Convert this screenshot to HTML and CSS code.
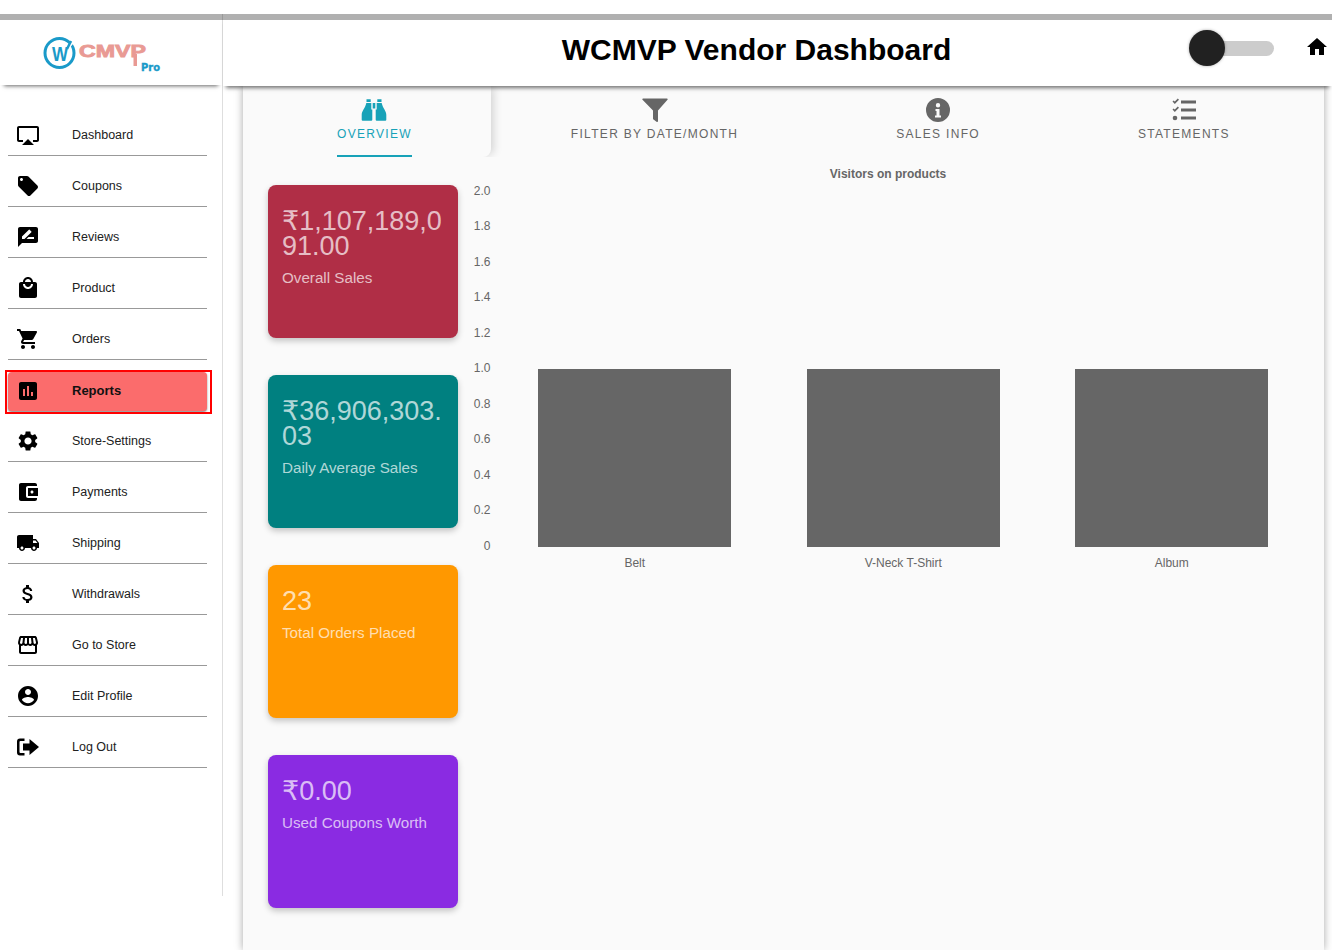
FILE: index.html
```html
<!DOCTYPE html>
<html lang="en">
<head>
  <meta charset="UTF-8">
  <meta name="viewport" content="width=device-width, initial-scale=1.0">
  <title>WCMVP Vendor Dashboard</title>
  <link rel="stylesheet" href="styles.css">
</head>
<body>
  <div class="layout">
    <aside class="sidebar">
      <div class="logo-box">
        <svg class="logo" width="120" height="40" viewBox="0 0 120 40">
          <circle cx="17.500" cy="19" r="14.500" fill="none" stroke="#1a9ac9" stroke-width="3"/>
          <path d="M27.500 12.500l5-6" stroke="white" stroke-width="2" fill="none"/>
          <path d="M25 15l4-8" stroke="#1a9ac9" stroke-width="2.500" fill="none"/>
          <text x="10" y="27" class="logo-w" textLength="16" lengthAdjust="spacingAndGlyphs">W</text>
          <text x="37" y="23" class="logo-cmvp" textLength="67" lengthAdjust="spacingAndGlyphs">CMVP</text>
          <rect class="logo-stem" x="91.500" y="20" width="3.500" height="12"/>
          <text x="99" y="37" class="logo-pro" textLength="19" lengthAdjust="spacingAndGlyphs">Pro</text>
        </svg>
      </div>
      <nav class="menu">
        <a class="menu-item"><svg viewBox="0 0 24 24"><path d="M6 22h12l-6-6zM21 3H3c-1.1 0-2 .9-2 2v12c0 1.1.9 2 2 2h4v-2H3V5h18v12h-4v2h4c1.1 0 2-.9 2-2V5c0-1.1-.9-2-2-2z"/></svg>Dashboard</a>
        <a class="menu-item"><svg viewBox="0 0 24 24"><path d="M21.41 11.58l-9-9C12.05 2.22 11.55 2 11 2H4c-1.1 0-2 .9-2 2v7c0 .55.22 1.05.59 1.42l9 9c.36.36.86.58 1.41.58.55 0 1.05-.22 1.41-.59l7-7c.37-.36.59-.86.59-1.41 0-.55-.23-1.06-.59-1.42zM5.5 7C4.67 7 4 6.33 4 5.5S4.67 4 5.5 4 7 4.67 7 5.5 6.33 7 5.5 7z"/></svg>Coupons</a>
        <a class="menu-item"><svg viewBox="0 0 24 24"><path d="M20 2H4c-1.1 0-1.99.9-1.99 2L2 22l4-4h14c1.1 0 2-.9 2-2V4c0-1.1-.9-2-2-2zM6 14v-2.47l6.88-6.88c.2-.2.51-.2.71 0l1.77 1.77c.2.2.2.51 0 .71L8.47 14H6zm12 0h-7.5l2-2H18v2z"/></svg>Reviews</a>
        <a class="menu-item"><svg viewBox="0 0 24 24"><path d="M19 6h-2c0-2.76-2.24-5-5-5S7 3.24 7 6H5c-1.1 0-1.99.9-1.99 2L3 20c0 1.1.9 2 2 2h14c1.1 0 2-.9 2-2V8c0-1.1-.9-2-2-2zm-7-3c1.66 0 3 1.34 3 3H9c0-1.66 1.34-3 3-3zm0 10c-2.76 0-5-2.24-5-5h2c0 1.66 1.34 3 3 3s3-1.34 3-3h2c0 2.76-2.24 5-5 5z"/></svg>Product</a>
        <a class="menu-item"><svg viewBox="0 0 24 24"><path d="M7 18c-1.1 0-1.99.9-1.99 2S5.9 22 7 22s2-.9 2-2-.9-2-2-2zM1 2v2h2l3.6 7.59-1.35 2.45c-.16.28-.25.61-.25.96 0 1.1.9 2 2 2h12v-2H7.42c-.14 0-.25-.11-.25-.25l.03-.12.9-1.63h7.45c.75 0 1.41-.41 1.75-1.03l3.58-6.49c.08-.14.12-.31.12-.48 0-.55-.45-1-1-1H5.21l-.94-2H1zm16 16c-1.1 0-1.99.9-1.99 2s.89 2 1.99 2 2-.9 2-2-.9-2-2-2z"/></svg>Orders</a>
        <a class="menu-item active"><svg viewBox="0 0 24 24"><path d="M19 3H5c-1.1 0-2 .9-2 2v14c0 1.1.9 2 2 2h14c1.1 0 2-.9 2-2V5c0-1.1-.9-2-2-2zM9 17H7v-7h2v7zm4 0h-2V7h2v10zm4 0h-2v-4h2v4z"/></svg>Reports</a>
        <a class="menu-item"><svg viewBox="0 0 24 24"><path d="M19.14 12.94c.04-.3.06-.61.06-.94 0-.32-.02-.64-.07-.94l2.03-1.58c.18-.14.23-.41.12-.61l-1.92-3.32c-.12-.22-.37-.29-.59-.22l-2.39.96c-.5-.38-1.03-.7-1.62-.94l-.36-2.54c-.04-.24-.24-.41-.48-.41h-3.84c-.24 0-.43.17-.47.41l-.36 2.54c-.59.24-1.13.57-1.62.94l-2.39-.96c-.22-.08-.47 0-.59.22L2.74 8.87c-.12.21-.08.47.12.61l2.03 1.58c-.05.3-.09.63-.09.94s.02.64.07.94l-2.03 1.58c-.18.14-.23.41-.12.61l1.92 3.32c.12.22.37.29.59.22l2.39-.96c.5.38 1.03.7 1.62.94l.36 2.54c.05.24.24.41.48.41h3.84c.24 0 .44-.17.47-.41l.36-2.54c.59-.24 1.13-.56 1.62-.94l2.39.96c.22.08.47 0 .59-.22l1.92-3.32c.12-.22.07-.47-.12-.61l-2.01-1.58zM12 15.6c-1.98 0-3.6-1.62-3.6-3.6s1.62-3.6 3.6-3.6 3.6 1.62 3.6 3.6-1.62 3.6-3.6 3.6z"/></svg>Store-Settings</a>
        <a class="menu-item"><svg viewBox="0 0 24 24"><path d="M21 18v1c0 1.1-.9 2-2 2H5c-1.11 0-2-.9-2-2V5c0-1.1.89-2 2-2h14c1.1 0 2 .9 2 2v1h-9c-1.11 0-2 .9-2 2v8c0 1.1.89 2 2 2h9zm-9-2h10V8H12v8zm4-2.5c-.83 0-1.5-.67-1.5-1.5s.67-1.5 1.5-1.5 1.5.67 1.5 1.5-.67 1.5-1.5 1.5z"/></svg>Payments</a>
        <a class="menu-item"><svg viewBox="0 0 24 24"><path d="M20 8h-3V4H3c-1.1 0-2 .9-2 2v11h2c0 1.66 1.34 3 3 3s3-1.34 3-3h6c0 1.66 1.34 3 3 3s3-1.34 3-3h2v-5l-3-4zM6 18.5c-.83 0-1.5-.67-1.5-1.5s.67-1.5 1.5-1.5 1.5.67 1.5 1.5-.67 1.5-1.5 1.5zm13.5-9l1.96 2.5H17V9.5h2.5zm-1.5 9c-.83 0-1.5-.67-1.5-1.5s.67-1.5 1.5-1.5 1.5.67 1.5 1.5-.67 1.5-1.5 1.5z"/></svg>Shipping</a>
        <a class="menu-item"><svg viewBox="0 0 24 24"><path d="M11.8 10.9c-2.27-.59-3-1.2-3-2.15 0-1.09 1.01-1.85 2.7-1.85 1.78 0 2.44.85 2.5 2.1h2.21c-.07-1.72-1.12-3.3-3.21-3.81V3h-3v2.16c-1.94.42-3.5 1.68-3.5 3.61 0 2.31 1.91 3.46 4.7 4.13 2.5.6 3 1.48 3 2.41 0 .69-.49 1.79-2.7 1.79-2.06 0-2.87-.92-2.98-2.1h-2.2c.12 2.19 1.76 3.42 3.68 3.83V21h3v-2.15c1.95-.37 3.5-1.5 3.5-3.55 0-2.84-2.43-3.81-4.7-4.4z"/></svg>Withdrawals</a>
        <a class="menu-item"><svg viewBox="0 0 24 24"><path d="M21.9 8.89l-1.05-4.37c-.22-.9-1-1.52-1.91-1.52H5.05c-.9 0-1.69.63-1.9 1.52L2.1 8.89c-.24 1.02-.02 2.06.62 2.88.08.11.19.19.28.29V19c0 1.1.9 2 2 2h14c1.1 0 2-.9 2-2v-6.94c.09-.09.2-.18.28-.28.64-.82.87-1.87.62-2.89zm-2.99-3.9l1.05 4.37c.1.42.01.84-.25 1.17-.14.18-.44.47-.94.47-.61 0-1.14-.49-1.21-1.14L16.98 5l1.93-.01zM13 5h1.96l.54 4.52c.05.39-.07.78-.33 1.07-.22.26-.54.41-.95.41-.67 0-1.22-.59-1.22-1.31V5zM8.49 9.52L9.04 5H11v4.69c0 .72-.55 1.31-1.29 1.31-.34 0-.65-.15-.89-.41-.25-.29-.37-.68-.33-1.07zm-4.45-.16L5.05 5h1.97l-.58 4.86c-.08.65-.6 1.14-1.21 1.14-.49 0-.8-.29-.93-.47-.27-.32-.36-.75-.26-1.17zM5 19v-6.03c.08.01.15.03.23.03.87 0 1.66-.36 2.24-.95.6.6 1.4.95 2.31.95.87 0 1.65-.36 2.23-.93.59.57 1.39.93 2.29.93.84 0 1.64-.35 2.24-.95.58.59 1.37.95 2.24.95.08 0 .15-.02.23-.03V19H5z"/></svg>Go to Store</a>
        <a class="menu-item"><svg viewBox="0 0 24 24"><path d="M12 2C6.48 2 2 6.48 2 12s4.48 10 10 10 10-4.48 10-10S17.52 2 12 2zm0 3c1.66 0 3 1.34 3 3s-1.34 3-3 3-3-1.34-3-3 1.34-3 3-3zm0 14.2c-2.5 0-4.71-1.28-6-3.22.03-1.99 4-3.08 6-3.08 1.99 0 5.97 1.09 6 3.08-1.29 1.94-3.5 3.22-6 3.22z"/></svg>Edit Profile</a>
        <a class="menu-item"><svg viewBox="0 0 24 24"><path d="M8.500 3.500H4A3 3 0 0 0 1 6.500v11a3 3 0 0 0 3 3h4.500V18H4.500a1 1 0 0 1-1-1V7a1 1 0 0 1 1-1h4z"/><path d="M13.500 4L23 12l-9.500 8v-4.500H7v-7h6.500z"/></svg>Log Out</a>
      </nav>
    </aside>

    <div class="right">
      <header class="header">
        <h1>WCMVP Vendor Dashboard</h1>
        <div class="actions">
          <div class="toggle"><span class="toggle-track"></span><span class="toggle-knob"></span></div>
          <svg class="home" viewBox="0 0 24 24"><path d="M10 20v-6h4v6h5v-8h3L12 3 2 12h3v8z"/></svg>
        </div>
      </header>

      <main class="panel">
        <div class="tabs">
          <div class="tab active">
            <svg viewBox="0 0 24 24"><path d="M4.500 2.300h4.200v2.700H4.500zM15.300 2.300h4.200v2.700h-4.200zM10.700 6h2.600v5.500h-2.600zM4.300 6h5v6.500h1v10.200a1 1 0 0 1-1 1H.7a1 1 0 0 1-1-1v-5C-.3 14 3.300 11 4.300 6zM14.700 6h5c1 5 4.600 8 4.600 11.700v5a1 1 0 0 1-1 1h-8.600a1 1 0 0 1-1-1V12.500h1z"/></svg>
            <span>OVERVIEW</span>
          </div>
          <div class="tab">
            <svg class="icon-low" viewBox="0 0 24 24"><path d="M0 .5h24a.8.8 0 0 1 .5 1.300L15 12.500V23a1 1 0 0 1-1.500.8l-3-2.200a1 1 0 0 1-.5-.8v-8.300L-.5 1.800A.8.8 0 0 1 0 .5z"/></svg>
            <span>FILTER BY DATE/MONTH</span>
          </div>
          <div class="tab">
            <svg class="icon-low" viewBox="0 0 24 24"><path fill-rule="evenodd" d="M12 0a12 12 0 1 0 0 24 12 12 0 0 0 0-24zm0 5a2.200 2.200 0 1 1 0 4.400A2.200 2.200 0 0 1 12 5zM9.500 11h4v6.500H15V19.500H9V17.500h1.500V13h-1z"/></svg>
            <span>SALES INFO</span>
          </div>
          <div class="tab">
            <svg viewBox="0 0 24 24"><path d="M9 3.500h15v3H9zM9 11.500h15v3H9zM9 19.500h15v3H9zM.500 4.500l1.100-1.100 1.200 1.200L5.800 1.500 7 2.700 2.800 6.900zM.500 12.500l1.100-1.100 1.200 1.200L5.800 9.500 7 10.700 2.800 14.900z"/><circle cx="3" cy="21" r="2.300"/></svg>
            <span>STATEMENTS</span>
          </div>
        </div>

        <div class="overview">
          <div class="cards">
            <div class="card red">
              <div class="card-value"><span class="rupee">₹</span>1,107,189,091.00</div>
              <div class="card-label">Overall Sales</div>
            </div>
            <div class="card teal">
              <div class="card-value"><span class="rupee">₹</span>36,906,303.03</div>
              <div class="card-label">Daily Average Sales</div>
            </div>
            <div class="card orange">
              <div class="card-value">23</div>
              <div class="card-label">Total Orders Placed</div>
            </div>
            <div class="card purple">
              <div class="card-value"><span class="rupee">₹</span>0.00</div>
              <div class="card-label">Used Coupons Worth</div>
            </div>
          </div>

          <div class="chart">
            <div class="chart-title">Visitors on products</div>
            <div class="chart-body">
              <div class="y-axis">
                <span>2.0</span><span>1.8</span><span>1.6</span><span>1.4</span><span>1.2</span><span>1.0</span><span>0.8</span><span>0.6</span><span>0.4</span><span>0.2</span><span>0</span>
              </div>
              <div class="plot">
                <div class="bar-col"><div class="bar-slot"><div class="bar" style="height: 50%"></div></div><div class="bar-label">Belt</div></div>
                <div class="bar-col"><div class="bar-slot"><div class="bar" style="height: 50%"></div></div><div class="bar-label">V-Neck T-Shirt</div></div>
                <div class="bar-col"><div class="bar-slot"><div class="bar" style="height: 50%"></div></div><div class="bar-label">Album</div></div>
              </div>
            </div>
          </div>
        </div>
      </main>
    </div>
  </div>
</body>
</html>
```

FILE: styles.css
```css
* {
  margin: 0;
  padding: 0;
  box-sizing: border-box;
}

html, body {
  height: 950px;
  overflow: hidden;
}

body {
  font-family: 'Liberation Sans', Arial, sans-serif;
  background: white;
  padding-top: 14px;
  color: #212121;
}

.layout {
  display: grid;
  grid-template-columns: 223px 1fr;
  height: 936px;
}

/* sidebar */
.sidebar {
  height: 882px;
  border-right: 1px solid rgba(0, 0, 0, 0.13);
  background: linear-gradient(#b0b0b0 6px, transparent 6px) border-box;
}

.logo-box {
  position: relative;
  height: 71px;
  border-top: 6px solid #b0b0b0;
  padding: 14px 0 0 42px;
  background: white;
  box-shadow: 0 5px 4px -4px rgba(0, 0, 0, 0.6);
}

.logo {
  display: block;
}

.logo-w {
  font-size: 20px;
  font-weight: 700;
  fill: #1a9ac9;
}

.logo-cmvp {
  font-size: 16px;
  font-weight: 700;
  fill: #e99a94;
  stroke: #e99a94;
  stroke-width: 0.8;
}

.logo-stem {
  fill: #e99a94;
}

.logo-pro {
  font-family: 'DejaVu Sans', sans-serif;
  font-size: 11px;
  font-weight: 700;
  fill: #1a9ac9;
  stroke: #1a9ac9;
  stroke-width: 0.4;
}

.menu {
  padding: 20px 15px 0 8px;
}

.menu-item {
  display: flex;
  align-items: center;
  gap: 32px;
  height: 51px;
  padding: 10px 0 0 8px;
  border-bottom: 1px solid #999;
  font-size: 12.5px;
  color: #212121;
}

.menu-item svg {
  width: 24px;
  height: 24px;
  flex: none;
  fill: black;
}

.menu-item.active {
  position: relative;
  height: 39px;
  margin-top: 12px;
  padding: 0 0 2px 8px;
  border-bottom: none;
  border-radius: 4px;
  background: #fb6c6c;
  box-shadow: 0 1px 2px rgba(0, 0, 0, 0.5);
  font-size: 13px;
  font-weight: 700;
  color: #111;
}

.menu-item.active::after {
  content: "";
  position: absolute;
  top: -2px;
  left: -3px;
  right: -5px;
  bottom: -3px;
  border: 2px solid #f00;
}

/* header */
.right {
  min-width: 0;
}

.header {
  position: relative;
  z-index: 2;
  display: flex;
  align-items: center;
  height: 72px;
  border-top: 6px solid #b0b0b0;
  padding: 0 0 6px 100px;
  background: white;
  box-shadow: 0 5px 4px -3px rgba(0, 0, 0, 0.55);
}

.header h1 {
  flex: 1;
  text-align: center;
  font-size: 30px;
  font-weight: 700;
  color: black;
}

.actions {
  display: flex;
  align-items: center;
  gap: 31px;
  width: 142px;
  margin-top: -4px;
}

.toggle {
  position: relative;
  width: 84px;
  height: 38px;
  flex: none;
  display: flex;
  align-items: center;
}

.toggle-track {
  display: block;
  width: 67px;
  height: 15px;
  margin-left: 17px;
  border-radius: 8px;
  background: #ccc;
}

.toggle-knob {
  position: absolute;
  top: 0;
  left: -2px;
  width: 36px;
  height: 36px;
  margin: 1px;
  border-radius: 50%;
  background: #212121;
  box-shadow: 0 0 3px rgba(0, 0, 0, 0.35);
}

.home {
  width: 24px;
  height: 24px;
  flex: none;
  margin-top: -2px;
  fill: black;
}

/* panel */
.panel {
  height: 864px;
  margin: 0 8px 0 20px;
  background: #fafafa;
  box-shadow: 0 0 8px rgba(0, 0, 0, 0.35);
}

.tabs {
  display: flex;
  margin: 0 15px;
  height: 71px;
  overflow: hidden;
}

.tab {
  display: flex;
  flex-direction: column;
  align-items: center;
  padding: 11px 79px 0;
  font-size: 12px;
  letter-spacing: 1.3px;
  color: #666;
  white-space: nowrap;
}

.tab svg {
  display: block;
  width: 24px;
  height: 24px;
  margin-bottom: 5.5px;
  fill: #666;
  overflow: visible;
}

.tab svg.icon-low {
  margin: 1px 0 4.5px;
}

.tab span {
  display: block;
  line-height: 14px;
  padding-bottom: 14.5px;
  border-bottom: 2px solid transparent;
}

.tab.active {
  position: relative;
  z-index: 1;
  margin-right: 1px;
  color: #17a2b8;
  background: #fafafa;
  border-radius: 0 0 8px 4px;
  box-shadow: 5px 0 8px -2px rgba(0, 0, 0, 0.15);
}

.tab.active svg {
  fill: #17a2b8;
}

.tab.active span {
  border-bottom-color: #17a2b8;
}

.overview {
  display: flex;
  padding: 0 6px 0 25px;
}

/* summary cards */
.cards {
  flex: none;
  width: 190px;
  margin-top: 28px;
  padding-right: 0.5px;
  display: flex;
  flex-direction: column;
  gap: 37px;
}

.card {
  height: 153px;
  padding: 24px 13px 0 14px;
  border-radius: 8px;
  color: rgba(255, 255, 255, 0.7);
  box-shadow: 0 3px 6px rgba(0, 0, 0, 0.22);
}

.card.red { background: #b02e46; }
.card.teal { background: #008080; }
.card.orange { background: #ff9800; }
.card.purple { background: #8a2be2; }

.card-value {
  font-size: 27px;
  line-height: 25px;
  word-break: break-all;
}

.rupee {
  font-family: 'DejaVu Sans', sans-serif;
  line-height: 0;
}

.card-label {
  margin-top: 10px;
  font-size: 15.2px;
  line-height: 17px;
}

/* bar chart */
.chart {
  flex: 1;
  min-width: 0;
  padding-top: 10px;
  font-size: 12px;
  color: #666;
}

.chart-title {
  text-align: center;
  font-weight: 700;
  line-height: 14px;
}

.chart-body {
  display: grid;
  grid-template-columns: 32.500px 1fr;
  gap: 10px;
  margin-top: 3px;
  padding-right: 12px;
}

.y-axis {
  display: flex;
  flex-direction: column;
  justify-content: space-between;
  align-items: flex-end;
  height: 369.400px;
  margin-top: -0.400px;
  line-height: 14px;
}

.plot {
  display: grid;
  grid-template-columns: repeat(3, 1fr);
  padding-top: 7px;
}

.bar-slot {
  display: flex;
  justify-content: center;
  align-items: flex-end;
  height: 356px;
}

.bar {
  width: 72%;
  background: #666;
}

.bar-label {
  margin-top: 9px;
  text-align: center;
  line-height: 14px;
}
```
